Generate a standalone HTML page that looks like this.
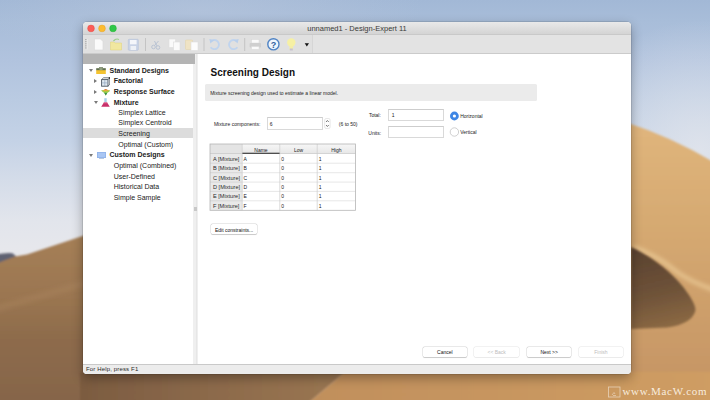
<!DOCTYPE html>
<html><head><meta charset="utf-8">
<style>
*{box-sizing:border-box;margin:0;padding:0}
html,body{width:710px;height:400px;overflow:hidden;font-family:"Liberation Sans",sans-serif}
body{position:relative;background:#b0a090}
.a{position:absolute}
#bg{position:absolute;left:0;top:0;width:710px;height:400px}
#win{position:absolute;left:83px;top:22px;width:548px;height:352px;border-radius:4px;overflow:hidden;background:#fff;box-shadow:0 4px 12px rgba(0,0,0,.32),0 0 0 .5px rgba(0,0,0,.18)}
#title{position:absolute;left:0;top:0;width:548px;height:12.6px;background:linear-gradient(#e9e9e9,#d4d4d4);border-bottom:1px solid #c9c9c9}
#title .t{position:absolute;left:0;width:548px;top:2px;text-align:center;font-size:7.5px;line-height:10px;color:#3a3a3a}
.tl{position:absolute;top:3px;width:7px;height:7px;border-radius:50%}
#tool{position:absolute;left:0;top:13px;width:548px;height:19px;background:#e0e0e0;border-bottom:1px solid #cbcbcb}
#side{position:absolute;left:0;top:32px;width:110px;height:310px;background:#fff}
#sidehdr{position:absolute;left:0;top:0;width:112px;height:9.5px;background:#b4b4b4;z-index:2}
.ti{position:absolute;font-size:7px;line-height:10px;color:#222;white-space:nowrap}
.ti.b{font-weight:bold;color:#222}
.tri{position:absolute;width:0;height:0}
.tri.d{border-left:2.1px solid transparent;border-right:2.1px solid transparent;border-top:3.6px solid #7a7a7a}
.tri.r{border-top:2.2px solid transparent;border-bottom:2.2px solid transparent;border-left:3.4px solid #7a7a7a}
#split{position:absolute;left:110px;top:32px;width:6px;height:310px;background:#efefef;border-right:1px solid #e2e2e2}
#split:after{content:"";position:absolute;left:2.5px;top:0;width:.6px;height:310px;background:#e6e6e6}
#main{position:absolute;left:115px;top:32px;width:433px;height:310px;background:#fff}
#status{position:absolute;left:0;top:342px;width:548px;height:10px;background:#ececec;border-top:1px solid #c9c9c9}
.s5{position:absolute;font-size:5px;line-height:7px;color:#1c1c1c;white-space:nowrap}
.inp{position:absolute;border:1px solid #d9d9d9;border-top-color:#cdcdcd;background:#fff}
.btn{position:absolute;height:9.8px;width:44.6px;border-radius:1.6px;background:#fff;box-shadow:0 0 0 .5px rgba(0,0,0,.16),0 .6px .8px rgba(0,0,0,.14);font-size:5px;line-height:11.4px;text-align:center;color:#111;white-space:nowrap}
.btn.dis{color:#bdbdbd;box-shadow:0 0 0 .5px rgba(0,0,0,.1),0 .5px .6px rgba(0,0,0,.06)}
#tbl{position:absolute;left:0;top:0}
.hc{position:absolute;top:144px;height:9.5px;font-size:5px;line-height:12px;text-align:center;color:#222}
.rt{position:absolute;font-size:5.6px;line-height:10.4px;color:#2a2a2a;white-space:nowrap}
.ct{position:absolute;font-size:5px;line-height:10.4px;color:#1a1a1a}
.sep{position:absolute;top:17px;width:1px;height:12px;background:#c6c6c6}
</style></head><body>
<svg id="bg" width="710" height="400" viewBox="0 0 710 400">
<defs>
<linearGradient id="sky" gradientUnits="userSpaceOnUse" x1="0" y1="0" x2="0" y2="260">
<stop offset="0" stop-color="#a2b8d6"/>
<stop offset="0.08" stop-color="#a8bdd9"/>
<stop offset="0.23" stop-color="#b1c3de"/>
<stop offset="0.385" stop-color="#bacbe2"/>
<stop offset="0.54" stop-color="#c4d2e6"/>
<stop offset="0.69" stop-color="#d4dce9"/>
<stop offset="0.85" stop-color="#e2e5ec"/>
<stop offset="1" stop-color="#e8e8ec"/>
</linearGradient>
<radialGradient id="skyR2" gradientUnits="userSpaceOnUse" cx="700" cy="150" r="130">
<stop offset="0" stop-color="#e2e5ec" stop-opacity=".85"/>
<stop offset="1" stop-color="#e2e5ec" stop-opacity="0"/>
</radialGradient>
<radialGradient id="skyR" gradientUnits="userSpaceOnUse" cx="620" cy="0" r="260" gradientTransform="translate(620 0) scale(1.3 .42) translate(-620 0)">
<stop offset="0" stop-color="#8badd8" stop-opacity=".75"/>
<stop offset="1" stop-color="#8badd8" stop-opacity="0"/>
</radialGradient>
<radialGradient id="skyL" gradientUnits="userSpaceOnUse" cx="200" cy="10" r="160" gradientTransform="translate(200 10) scale(1.4 .35) translate(-200 -10)">
<stop offset="0" stop-color="#b8c6dc" stop-opacity=".6"/>
<stop offset="1" stop-color="#b8c6dc" stop-opacity="0"/>
</radialGradient>
<linearGradient id="duneL" gradientUnits="userSpaceOnUse" x1="0" y1="240" x2="0" y2="400">
<stop offset="0" stop-color="#a57f56"/>
<stop offset="0.35" stop-color="#9b7651"/>
<stop offset="0.6" stop-color="#8e6c4c"/>
<stop offset="1" stop-color="#86654a"/>
</linearGradient>
<linearGradient id="duneR" gradientUnits="userSpaceOnUse" x1="0" y1="125" x2="0" y2="400">
<stop offset="0" stop-color="#e0b57c"/>
<stop offset="0.35" stop-color="#d6aa72"/>
<stop offset="1" stop-color="#c49363"/>
</linearGradient>
<linearGradient id="shad" gradientUnits="userSpaceOnUse" x1="631" y1="250" x2="650" y2="330">
<stop offset="0" stop-color="#5a4230"/>
<stop offset="0.6" stop-color="#6f5339"/>
<stop offset="1" stop-color="#8a6843"/>
</linearGradient>
<linearGradient id="botR" gradientUnits="userSpaceOnUse" x1="300" y1="0" x2="710" y2="0">
<stop offset="0" stop-color="#c08f5c"/>
<stop offset="1" stop-color="#cf9d63"/>
</linearGradient>
<linearGradient id="botL" gradientUnits="userSpaceOnUse" x1="83" y1="0" x2="340" y2="0">
<stop offset="0" stop-color="#7c5c41"/>
<stop offset="0.5" stop-color="#8c6a4b"/>
<stop offset="1" stop-color="#9a7652"/>
</linearGradient>
<filter id="bl" x="-10%" y="-10%" width="120%" height="120%"><feGaussianBlur stdDeviation="1"/></filter>
<filter id="bl3" x="-20%" y="-20%" width="140%" height="140%"><feGaussianBlur stdDeviation="2"/></filter>
</defs>
<rect width="710" height="400" fill="url(#sky)"/>
<rect width="710" height="260" fill="url(#skyR2)"/>
<rect width="710" height="260" fill="url(#skyL)"/>
<g filter="url(#bl)">
<path d="M625 122 Q672 137 715 163 L715 405 L625 405 Z" fill="url(#duneR)"/>
<path d="M-5 254.5 L3 253.5 Q8 252.6 12.5 253.2 L16 256.3 L16 260 L-5 266 Z" fill="#5f6272"/>
<path d="M-5 264 L15 256.6 L27 254.6 L90 233.5 L90 402 L-5 402 Z" fill="url(#duneL)"/>
<path d="M80 372 L345 372 L306 405 L80 405 Z" fill="url(#botL)"/>
<path d="M345 372 L715 372 L715 405 L306 405 Z" fill="url(#botR)"/>
</g>
<g filter="url(#bl3)"><path d="M-5 309 L90 282" stroke="#b08b62" stroke-width="6" opacity=".35"/></g>
<g filter="url(#bl3)"><path d="M634 247 C652 254 665 262 677 272 C688 280 700 285 714 290" fill="none" stroke="#efd09c" stroke-width="4" opacity=".75"/></g>
<g filter="url(#bl)">
<path d="M631 247 C650 256 670 270 684 288 C692 299 697 307 695 312 C692 320 684 325 667 327.5 L631 329 Z" fill="url(#shad)"/>
</g>
</svg>

<div id="win">
 <div id="title">
  <svg class="a" style="left:0;top:0" width="40" height="13" viewBox="83 22 40 13"><circle cx="91" cy="28.4" r="3.4" fill="#fc5d57" stroke="#e4463f" stroke-width=".4"/><circle cx="102" cy="28.4" r="3.4" fill="#fdbc2f" stroke="#e0a024" stroke-width=".4"/><circle cx="113" cy="28.4" r="3.4" fill="#30c748" stroke="#1cad2c" stroke-width=".4"/></svg>
  <div class="t">unnamed1 - Design-Expert 11</div>
 </div>
 <div id="tool"></div>
 <div id="side">
  <div id="sidehdr"></div>
 </div>
 <div id="split"></div>
 <div id="main"></div>
 <div id="status"><div class="a" style="left:3px;top:0;font-size:6px;letter-spacing:.15px;line-height:9px;color:#2a2a2a">For Help, press F1</div></div>
</div>

<!-- toolbar icons (page coords) -->
<svg class="a" style="left:83px;top:34px" width="230" height="20" viewBox="83 34 230 20">
 <g fill="#b0b0b0"><rect x="85" y="39.0" width="1.8" height="1.1"/><rect x="85" y="41.1" width="1.8" height="1.1"/><rect x="85" y="43.2" width="1.8" height="1.1"/><rect x="85" y="45.3" width="1.8" height="1.1"/><rect x="85" y="47.4" width="1.8" height="1.1"/></g><rect x="86.8" y="39" width=".6" height="10.5" fill="#f4f4f4"/>
 <!-- new doc -->
 <path d="M94.5 39 H100.5 L103 41.5 V50 H94.5 Z" fill="#fafafa" stroke="#d8d8d8" stroke-width=".6"/>
 <!-- folder -->
 <path d="M110.5 42 H114 L115 43 H121.5 V50 H110.5 Z" fill="#f1e7a0" stroke="#e0d27a" stroke-width=".5"/>
 <path d="M113.5 41 Q116 38 119 39.5" fill="none" stroke="#9ccf8c" stroke-width="1.2"/>
 <!-- save -->
 <rect x="128.3" y="39.3" width="10" height="11" rx=".8" fill="#c9d3e6" stroke="#b3bfd6" stroke-width=".6"/>
 <rect x="130" y="40" width="6.6" height="4.3" fill="#f4f6fa"/>
 <rect x="130.5" y="46" width="5.6" height="4" fill="#eef1f6"/>
 <rect x="145" y="38" width="1" height="13" fill="#c4c4c4"/>
 <!-- cut -->
 <g fill="none" stroke="#b9c3d3" stroke-width="1"><circle cx="153.5" cy="47" r="1.8"/><circle cx="158" cy="47.5" r="1.8"/><path d="M154.5 45.5 L158.5 41 M157 46 L154.5 41"/></g>
 <!-- copy -->
 <rect x="169" y="39" width="6.5" height="8.5" fill="#fafafa" stroke="#dcdcdc" stroke-width=".6"/>
 <rect x="173.5" y="42" width="6.5" height="8.5" fill="#fbfbfb" stroke="#dcdcdc" stroke-width=".6"/>
 <!-- paste -->
 <rect x="185.5" y="40" width="7" height="9.5" rx=".6" fill="#efe3c4" stroke="#e3d3a6" stroke-width=".5"/>
 <rect x="191" y="42" width="7" height="8.5" fill="#fcfcfc" stroke="#dedede" stroke-width=".6"/>
 <rect x="203.5" y="38" width="1" height="13" fill="#c4c4c4"/>
 <!-- undo/redo -->
 <path d="M211.2 41.2 A4.6 4.6 0 1 1 210.6 47.2" fill="none" stroke="#c0d4ee" stroke-width="1.9"/>
 <path d="M209.3 38.9 L214.2 40 L210.4 43.6 Z" fill="#b9cfeb"/>
 <path d="M236.8 41.2 A4.6 4.6 0 1 0 237.4 47.2" fill="none" stroke="#c0d4ee" stroke-width="1.9"/>
 <path d="M238.7 38.9 L233.8 40 L237.6 43.6 Z" fill="#b9cfeb"/>
 <rect x="244.2" y="38" width="1" height="13" fill="#c4c4c4"/>
 <!-- printer -->
 <rect x="251.5" y="39.5" width="7.5" height="3.5" fill="#fafafa" stroke="#d8d8d8" stroke-width=".5"/>
 <rect x="249.6" y="43" width="11.4" height="4.6" rx=".8" fill="#cfcfcf"/>
 <rect x="251.5" y="46.5" width="7.5" height="3" fill="#fafafa" stroke="#d8d8d8" stroke-width=".5"/>
 <!-- help -->
 <circle cx="273.4" cy="44.3" r="5.6" fill="#eef5fc" stroke="#4f83c4" stroke-width="1.4"/>
 <text x="273.4" y="47.6" font-family="Liberation Sans" font-weight="bold" font-size="9" text-anchor="middle" fill="#2d5f9e">?</text>
 <!-- bulb -->
 <circle cx="291.3" cy="42.5" r="4.2" fill="#f6f0a4"/>
 <rect x="289.5" y="46" width="3.6" height="3.6" fill="#f3eea6"/>
 <rect x="289.8" y="48.5" width="3" height="2" fill="#c9c2cf"/>
 <!-- dropdown -->
 <path d="M304.7 43.2 H309 L306.85 46.5 Z" fill="#111"/>
</svg>
<div class="a" style="left:311.5px;top:35px;width:319.5px;height:18px;background:#e3e3e3;border-left:1px solid #d6d6d6"></div>

<!-- sidebar tree -->
<div class="a" style="left:83px;top:54.7px;width:110px;height:310px">
 <div class="tri d" style="left:6px;top:14.4px"></div>
 <svg class="a" style="left:13px;top:12.4px" width="10" height="7" viewBox="0 0 10 7"><rect x=".2" y="3" width="9.6" height="4" fill="#f4c330"/><rect x=".2" y="1.2" width="9.6" height="2" fill="#5f6e4a"/><rect x="3" y=".2" width="4" height="1.4" fill="#6f7d5c"/><rect x="3.5" y="1.6" width="3" height="1" fill="#b8c8a8"/></svg>
 <div class="ti b" style="left:26.5px;top:11.3px">Standard Designs</div>
 <div class="tri r" style="left:11.3px;top:24.3px"></div>
 <svg class="a" style="left:17.8px;top:22.3px" width="9.5" height="10" viewBox="0 0 9.5 10"><rect x=".6" y="2.6" width="6.4" height="6.6" fill="#dfe8f0" stroke="#4b5560" stroke-width=".9"/><path d="M.6 2.6 L2.6 .8 H8.8 V7.2 L7 9.2 M7 2.6 L8.8 .8" fill="none" stroke="#4b5560" stroke-width=".8"/><path d="M3.8 2.8 V9 M.8 5.9 H6.8" stroke="#8aa0b8" stroke-width=".6"/><circle cx="8.6" cy="1" r=".9" fill="#333"/></svg>
 <div class="ti b" style="left:30.7px;top:21.8px">Factorial</div>
 <div class="tri r" style="left:11.3px;top:34.9px"></div>
 <svg class="a" style="left:17.8px;top:33.6px" width="9.5" height="7.5" viewBox="0 0 9.5 7.5"><path d="M0 2.6 Q4.75 .8 9.5 2.6 L6.2 5 L4.75 7.5 L3.3 5 Z" fill="#86c84a"/><path d="M2.2 2.4 Q4.75 -.6 7.3 2.4 Q4.75 3.4 2.2 2.4 Z" fill="#d8743a"/><path d="M1.2 2.6 Q4.75 2 8.3 2.6 L7.2 3.4 Q4.75 3 2.3 3.4 Z" fill="#e8c23a"/><path d="M3.3 5 L6.2 5 L4.75 7.5 Z" fill="#3c8f4a"/></svg>
 <div class="ti b" style="left:30.7px;top:32.4px">Response Surface</div>
 <div class="tri d" style="left:11.3px;top:45.9px"></div>
 <svg class="a" style="left:17.8px;top:43.2px" width="9" height="9" viewBox="0 0 9 9"><rect x="3.3" y=".2" width="2.4" height="4" fill="#a8d0ea"/><path d="M3.2 4 H5.8 L8.8 8.8 H.2 Z" fill="#c8306a"/><path d="M3.2 4 H5.8 L6.6 5.3 H2.4 Z" fill="#e07aa0"/></svg>
 <div class="ti b" style="left:30.7px;top:43px">Mixture</div>
 <div class="ti" style="left:35.3px;top:53.6px">Simplex Lattice</div>
 <div class="ti" style="left:35.3px;top:63.8px">Simplex Centroid</div>
 <div class="a" style="left:0;top:73.6px;width:110px;height:10.2px;background:#dcdcdc"></div>
 <div class="ti" style="left:35.3px;top:74.4px">Screening</div>
 <div class="ti" style="left:35.3px;top:85.2px">Optimal (Custom)</div>
 <div class="tri d" style="left:6px;top:99px"></div>
 <svg class="a" style="left:13.5px;top:97px" width="9" height="7" viewBox="0 0 9 7"><rect x="0" y="0" width="9" height="6" fill="#8fb2ea"/><rect x=".8" y=".8" width="7.4" height="4.4" fill="#a9c6f3"/><rect x="2" y="6" width="5" height="1" fill="#b9c9e0"/></svg>
 <div class="ti b" style="left:26.5px;top:95.6px">Custom Designs</div>
 <div class="ti" style="left:30.7px;top:106.5px">Optimal (Combined)</div>
 <div class="ti" style="left:30.7px;top:116.9px">User-Defined</div>
 <div class="ti" style="left:30.7px;top:127.3px">Historical Data</div>
 <div class="ti" style="left:30.7px;top:138px">Simple Sample</div>
</div>
<div class="a" style="left:194px;top:207px;width:3px;height:4px;background:#c8c8c8"></div>

<!-- main content -->
<div class="a" style="left:210.6px;top:66.2px;font-size:10px;line-height:14px;font-weight:bold;color:#111;white-space:nowrap">Screening Design</div>
<div class="a" style="left:204.5px;top:84px;width:332.7px;height:17px;background:#ebebeb;border-radius:1.5px"></div>
<div class="s5" style="left:210.2px;top:89.6px">Mixture screening design used to estimate a linear model.</div>

<div class="s5" style="left:213.9px;top:120.6px">Mixture components:</div>
<div class="inp" style="left:267.3px;top:117.2px;width:55.4px;height:12.4px"></div>
<div class="s5" style="left:269.7px;top:120.6px">6</div>
<svg class="a" style="left:324px;top:118px" width="7" height="11" viewBox="0 0 7 11"><rect x=".7" y=".5" width="5.4" height="10" rx="1.5" fill="#fff" stroke="#cfcfcf" stroke-width=".5"/><path d="M2.2 3.8 L3.4 2.6 L4.6 3.8 M2.2 7.2 L3.4 8.4 L4.6 7.2" fill="none" stroke="#333" stroke-width=".8"/></svg>
<div class="s5" style="left:338.8px;top:121.4px">(6 to 50)</div>

<div class="s5" style="left:368.9px;top:111.7px">Total:</div>
<div class="inp" style="left:388.1px;top:109.2px;width:55.6px;height:11.6px"></div>
<div class="s5" style="left:391.7px;top:111.7px">1</div>
<div class="s5" style="left:368.3px;top:129.6px">Units:</div>
<div class="inp" style="left:388.1px;top:126.4px;width:55.6px;height:12px"></div>

<svg class="a" style="left:448px;top:109px" width="14" height="30" viewBox="448 109 14 30">
 <circle cx="454.4" cy="116" r="4.4" fill="#3e86e5"/>
 <circle cx="454.4" cy="116" r="1.6" fill="#fff"/>
 <circle cx="454.4" cy="132" r="4.2" fill="#fff" stroke="#b0b0b0" stroke-width=".6"/>
</svg>
<div class="s5" style="left:460.2px;top:113px">Horizontal</div>
<div class="s5" style="left:460.2px;top:128.6px">Vertical</div>

<!-- table -->
<div id="tbl">
<svg class="a" style="left:0;top:0" width="710" height="400" viewBox="0 0 710 400"><defs><linearGradient id="hg" x1="0" y1="0" x2="0" y2="1"><stop offset="0" stop-color="#f7f7f7"/><stop offset="1" stop-color="#e7e7e7"/></linearGradient></defs><rect x="210" y="144" width="32.2" height="66.3" fill="#e9e9e9"/><rect x="210" y="144" width="32.2" height="9.5" fill="#e4e4e4"/><rect x="242.2" y="144" width="113.3" height="9.5" fill="url(#hg)"/><line x1="210" y1="163.2" x2="242.2" y2="163.2" stroke="#d0d0d0" stroke-width=".7"/><line x1="242.2" y1="163.2" x2="355.5" y2="163.2" stroke="#dddddd" stroke-width=".7"/><line x1="210" y1="172.7" x2="242.2" y2="172.7" stroke="#d0d0d0" stroke-width=".7"/><line x1="242.2" y1="172.7" x2="355.5" y2="172.7" stroke="#dddddd" stroke-width=".7"/><line x1="210" y1="182.1" x2="242.2" y2="182.1" stroke="#d0d0d0" stroke-width=".7"/><line x1="242.2" y1="182.1" x2="355.5" y2="182.1" stroke="#dddddd" stroke-width=".7"/><line x1="210" y1="191.4" x2="242.2" y2="191.4" stroke="#d0d0d0" stroke-width=".7"/><line x1="242.2" y1="191.4" x2="355.5" y2="191.4" stroke="#dddddd" stroke-width=".7"/><line x1="210" y1="200.8" x2="242.2" y2="200.8" stroke="#d0d0d0" stroke-width=".7"/><line x1="242.2" y1="200.8" x2="355.5" y2="200.8" stroke="#dddddd" stroke-width=".7"/><line x1="210" y1="153.5" x2="355.5" y2="153.5" stroke="#c6c6c6" stroke-width=".7"/><line x1="242.2" y1="144" x2="242.2" y2="210.3" stroke="#cdcdcd" stroke-width=".7"/><line x1="279.8" y1="144" x2="279.8" y2="210.3" stroke="#cdcdcd" stroke-width=".7"/><line x1="317.2" y1="144" x2="317.2" y2="210.3" stroke="#cdcdcd" stroke-width=".7"/><line x1="242.4" y1="153.2" x2="279.6" y2="153.2" stroke="#222" stroke-width="1.1"/><rect x="210" y="144" width="145.5" height="66.3" fill="none" stroke="#b5b5b5" stroke-width=".8"/></svg>
<div class="hc" style="left:242.2px;width:37.6px">Name</div>
<div class="hc" style="left:279.8px;width:37.4px">Low</div>
<div class="hc" style="left:317.2px;width:38.3px">High</div>
<div class="rt" style="left:213px;top:153.50px">A [Mixture]</div>
<div class="ct" style="left:243.6px;top:153.50px">A</div>
<div class="ct" style="left:281.2px;top:153.50px">0</div>
<div class="ct" style="left:318.8px;top:153.50px">1</div>
<div class="rt" style="left:213px;top:163.20px">B [Mixture]</div>
<div class="ct" style="left:243.6px;top:163.20px">B</div>
<div class="ct" style="left:281.2px;top:163.20px">0</div>
<div class="ct" style="left:318.8px;top:163.20px">1</div>
<div class="rt" style="left:213px;top:172.70px">C [Mixture]</div>
<div class="ct" style="left:243.6px;top:172.70px">C</div>
<div class="ct" style="left:281.2px;top:172.70px">0</div>
<div class="ct" style="left:318.8px;top:172.70px">1</div>
<div class="rt" style="left:213px;top:182.10px">D [Mixture]</div>
<div class="ct" style="left:243.6px;top:182.10px">D</div>
<div class="ct" style="left:281.2px;top:182.10px">0</div>
<div class="ct" style="left:318.8px;top:182.10px">1</div>
<div class="rt" style="left:213px;top:191.40px">E [Mixture]</div>
<div class="ct" style="left:243.6px;top:191.40px">E</div>
<div class="ct" style="left:281.2px;top:191.40px">0</div>
<div class="ct" style="left:318.8px;top:191.40px">1</div>
<div class="rt" style="left:213px;top:200.80px">F [Mixture]</div>
<div class="ct" style="left:243.6px;top:200.80px">F</div>
<div class="ct" style="left:281.2px;top:200.80px">0</div>
<div class="ct" style="left:318.8px;top:200.80px">1</div>
</div>

<div class="btn" style="left:211px;top:224px;width:46.2px;height:10.2px;line-height:12.2px">Edit constraints...</div>

<div class="btn" style="left:422.6px;top:347px">Cancel</div>
<div class="btn dis" style="left:474.4px;top:347px">&lt;&lt; Back</div>
<div class="btn" style="left:526.9px;top:347px">Next &gt;&gt;</div>
<div class="btn dis" style="left:578.7px;top:347px">Finish</div>

<!-- watermark -->
<svg class="a" style="left:607px;top:386px" width="15" height="12" viewBox="0 0 15 12"><rect x="1.5" y="1" width="11.5" height="10" fill="none" stroke="rgba(255,255,255,.55)" stroke-width=".8"/><path d="M5 9 L7 6.5 L8 8 M6 9.5 h3" fill="none" stroke="rgba(255,255,255,.55)" stroke-width=".7"/></svg>
<div class="a" style="left:622.5px;top:384px;font-family:'Liberation Serif',serif;font-size:11px;line-height:14px;letter-spacing:.68px;color:rgba(255,250,240,.88);white-space:nowrap">www.MacW.com</div>
</body></html>
